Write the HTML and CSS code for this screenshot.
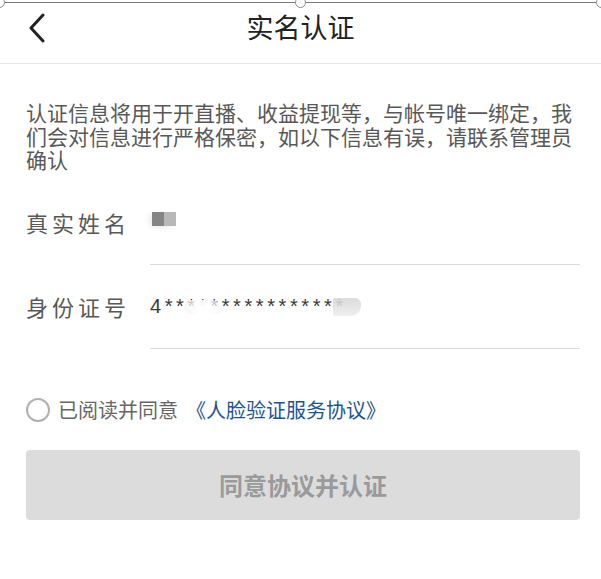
FILE: index.html
```html
<!DOCTYPE html>
<html lang="zh-CN">
  <head>
    <meta charset="UTF-8" />
    <meta name="viewport" content="width=device-width, initial-scale=1.0" />
    <title>实名认证</title>
    <link rel="stylesheet" href="styles.css">
  </head>
  <body>
    <!-- selection frame left on top of the capture -->
    <div class="frame">
      <span class="handle handle-left"></span>
      <span class="handle handle-mid"></span>
      <span class="handle handle-right"></span>
    </div>

    <header class="topbar">
      <a class="back" href="#">
        <svg width="20" height="30" viewBox="0 0 20 30">
          <polyline points="16,2 4,15 16,28" fill="none" stroke="#222" stroke-width="3" stroke-linecap="round" stroke-linejoin="round" />
        </svg>
      </a>
      <h1>实名认证</h1>
      <span></span>
    </header>

    <main class="content">
      <p class="notice">认证信息将用于开直播、收益提现等，与帐号唯一绑定，我们会对信息进行严格保密，如以下信息有误，请联系管理员确认</p>

      <div class="field">
        <span class="field-label">真实姓名</span>
        <div class="field-value">
          <span class="mosaic">
            <i class="m1"></i><i class="m2"></i>
          </span>
        </div>
      </div>

      <div class="field">
        <span class="field-label">身份证号</span>
        <div class="field-value">
          <span class="idno">4****************<span class="smear"></span><span class="smear-end"></span></span>
        </div>
      </div>

      <label class="agree">
        <span class="radio"></span>
        <span>已阅读并同意</span>
        <a href="#" class="agree-link">《人脸验证服务协议》</a>
      </label>

      <button class="submit" disabled>同意协议并认证</button>
    </main>
  </body>
</html>
```

FILE: styles.css
```css
body {
  background-color: #fff;
  color: #222;
  font-family: "Noto Sans CJK SC", "Noto Sans", sans-serif;
  margin: 0;
  position: relative;
}
.frame {
  border-top: 1px solid #7a7a7a;
  height: 0;
  left: 0;
  position: absolute;
  right: 0;
  top: 2px;
}
.handle {
  background-color: #fff;
  border: 1px solid #8a8a8a;
  border-radius: 50%;
  height: 9px;
  position: absolute;
  top: -6px;
  width: 9px;
}
.handle-left {
  left: -6px;
}
.handle-mid {
  left: 295px;
}
.handle-right {
  right: -6px;
}
.topbar {
  align-items: start;
  border-bottom: 1px solid #e6e6e6;
  display: grid;
  grid-template-columns: 70px 1fr 70px;
  height: 63px;
}
.back {
  display: block;
  margin: 13px 0 0 27px;
  width: 20px;
}
.topbar h1 {
  color: #222;
  font-size: 27px;
  font-weight: normal;
  line-height: 54px;
  margin: 0;
  text-align: center;
}
.content {
  padding: 0 21px 0 26px;
}
.notice {
  color: #585858;
  font-size: 21px;
  line-height: 23.5px;
  margin: 37px 0 0;
}
.field {
  display: flex;
  margin-top: 35px;
}
.field + .field {
  margin-top: 26px;
}
.field-label {
  color: #585858;
  font-size: 22px;
  letter-spacing: 4px;
  line-height: 30px;
  width: 124px;
}
.field-value {
  border-bottom: 1px solid #dcdcdc;
  flex: 1;
  height: 30px;
  padding-bottom: 27px;
}
.mosaic {
  border-radius: 6px 10px 4px 12px;
  box-shadow: -4px 2px 6px #ececec;
  display: inline-flex;
  margin: 5px 0 0 2px;
}
.mosaic i {
  display: block;
  height: 14px;
  width: 12px;
}
.mosaic .m1 {
  background-color: #858585;
}
.mosaic .m2 {
  background-color: #b8b8b8;
}
.idno {
  color: #3a3a3a;
  display: inline-block;
  font-family: "Liberation Sans", sans-serif;
  font-size: 20px;
  letter-spacing: 3.6px;
  line-height: 30px;
  position: relative;
}
.smear {
  background: linear-gradient(90deg, rgba(240, 240, 240, 0.6), rgba(255, 255, 255, 0.95) 40%, rgba(255, 255, 255, 0.95) 60%, rgba(240, 240, 240, 0.5));
  border-radius: 10px 14px 6px 10px;
  height: 14px;
  left: 34px;
  position: absolute;
  top: 9px;
  width: 38px;
}
.smear-end {
  background: linear-gradient(180deg, rgba(215, 215, 215, 0.9), rgba(235, 235, 235, 0.8));
  border-radius: 2px 6px 10px 2px;
  height: 18px;
  position: absolute;
  right: -14px;
  top: 7px;
  width: 28px;
}
.agree {
  align-items: center;
  color: #666;
  display: flex;
  font-size: 20px;
  line-height: 30px;
  margin-top: 46px;
}
.radio {
  border: 2px solid #b0b0b0;
  border-radius: 50%;
  box-sizing: border-box;
  height: 24px;
  margin-right: 8px;
  width: 24px;
}
.agree-link {
  color: #1d5590;
  margin-left: 8px;
  text-decoration: none;
}
.submit {
  background-color: #dcdcdd;
  border: none;
  border-radius: 4px;
  color: #9a9a9a;
  display: block;
  font-family: inherit;
  font-size: 24px;
  font-weight: bold;
  height: 70px;
  margin-top: 25px;
  width: 100%;
}
```
